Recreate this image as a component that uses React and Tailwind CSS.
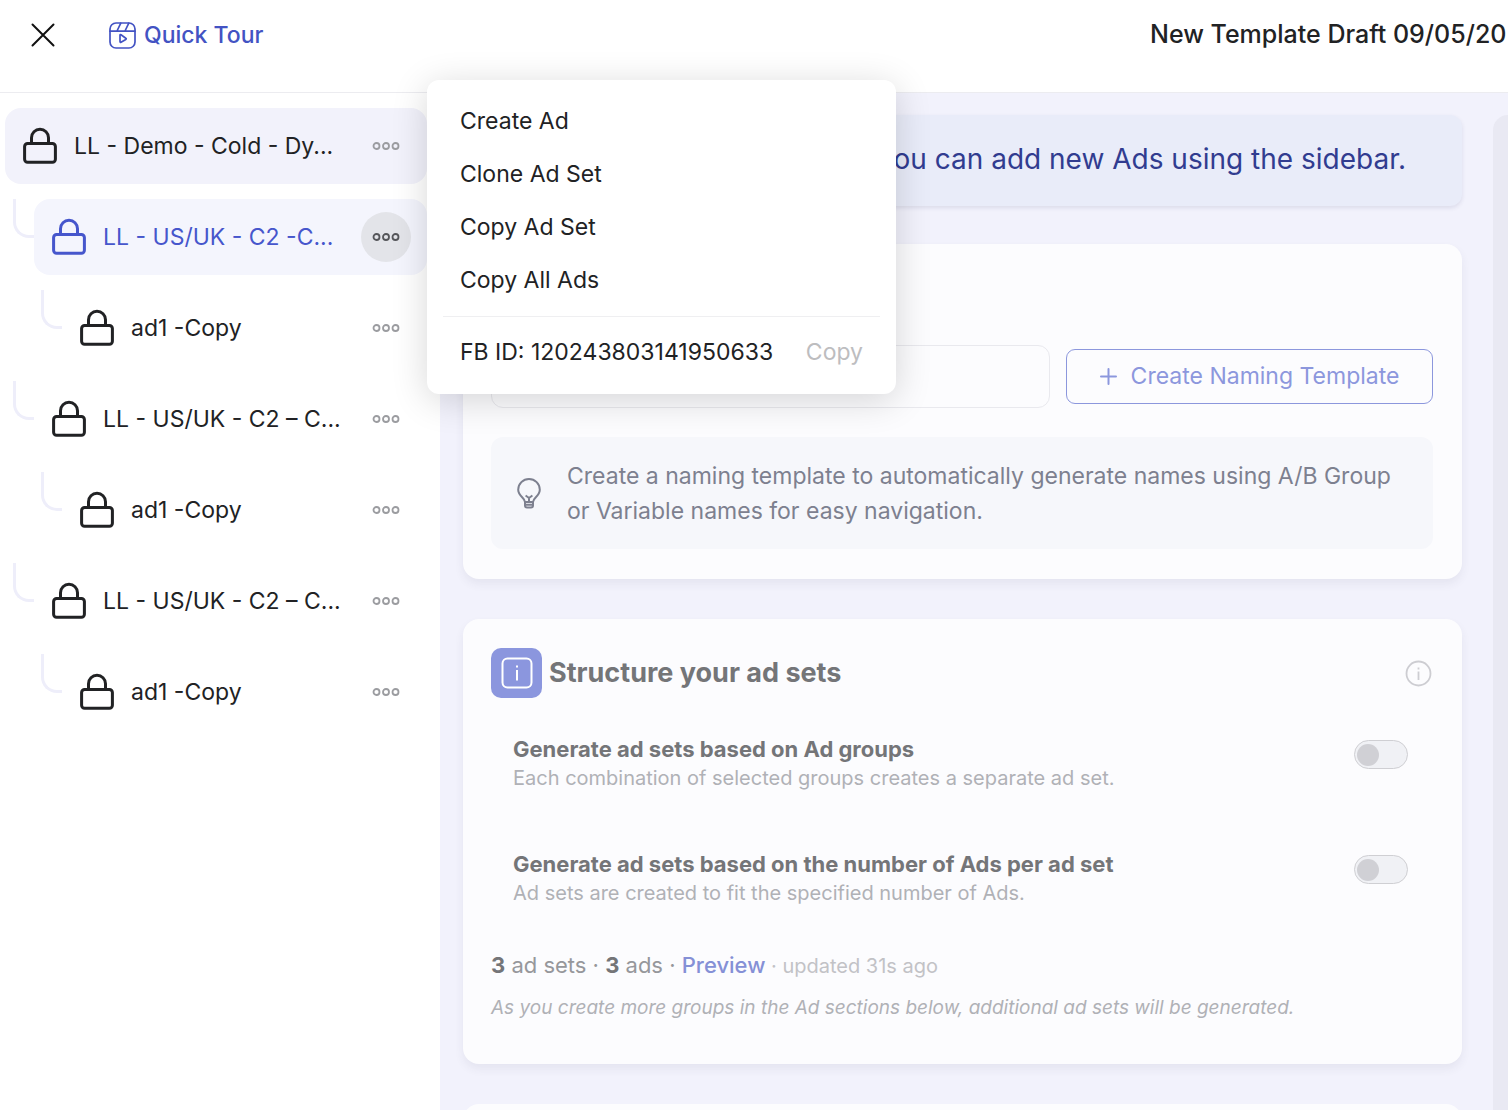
import { useState } from "react";

const treeItems = [
  { id: 1, level: 0, name: "LL - Demo - Cold - Dy...", state: "parent" },
  { id: 2, level: 1, name: "LL - US/UK - C2 -C...", state: "active" },
  { id: 3, level: 2, name: "ad1 -Copy" },
  { id: 4, level: 1, name: "LL - US/UK - C2 – C..." },
  { id: 5, level: 2, name: "ad1 -Copy" },
  { id: 6, level: 1, name: "LL - US/UK - C2 – C..." },
  { id: 7, level: 2, name: "ad1 -Copy" },
];

const menuItems = ["Create Ad", "Clone Ad Set", "Copy Ad Set", "Copy All Ads"];

const LockIcon = () => (
  <svg width="34" height="38" viewBox="0 0 34 38" fill="none" stroke="currentColor" strokeWidth="3" className="shrink-0">
    <rect x="1.6" y="16.500" width="30.8" height="18.8" rx="3" />
    <path d="M8.500 16.500v-5.800a8.500 8.500 0 0 1 17 0v5.800" />
  </svg>
);

const DotsIcon = () => (
  <svg width="28" height="10" viewBox="0 0 28 10" fill="none" stroke="currentColor" strokeWidth="1.8">
    <circle cx="4.500" cy="5" r="3" />
    <circle cx="14" cy="5" r="3" />
    <circle cx="23.500" cy="5" r="3" />
  </svg>
);

const TourIcon = () => (
  <svg width="27" height="27" viewBox="0 0 27 27" fill="none" stroke="currentColor" strokeWidth="1.7" strokeLinejoin="round" strokeLinecap="round">
    <rect x="1" y="1" width="25" height="25" rx="6" />
    <path d="M1 9.200h25M11.800 1.200 8 9M19.800 1.200 16 9M11 13.200v6.400q0 1.100 1 .6l4.800-2.800q.9-.6 0-1.200l-4.800-3.400q-1-.6-1 .4Z" />
  </svg>
);

const BulbIcon = () => (
  <svg width="24" height="31" viewBox="0 0 24 31" fill="none" stroke="currentColor" strokeWidth="2" strokeLinejoin="round" className="shrink-0">
    <path d="M8 24c0-4-6.800-6-6.800-12.200a10.800 10.800 0 0 1 21.600 0C22.800 18 16 20 16 24Z" />
    <path d="M8 24v3.500a2 2 0 0 0 2 2h4a2 2 0 0 0 2-2V24M8 26.800h8M12 24v-4.500M8.600 17.500l3.400 2.500 3.400-2.500" />
  </svg>
);

const TreeRow = ({ item }) => {
  const active = item.state === "active";

  return (
    <li className="flex h-[76px]">
      {item.level > 0 && (
        <span
          className={`h-[39px] w-[21px] shrink-0 rounded-bl-2xl border-b-3 border-l-3 border-[#eeeefa] ${
            item.level === 1 ? "ml-2" : "ml-9"
          }`}
        />
      )}
      <div
        className={`flex min-w-0 flex-1 items-center rounded-2xl pr-4 pl-[18px] ${
          active ? "bg-[#f4f5fd] text-[#4656cc]" : "text-[#212224]"
        } ${item.state === "parent" ? "bg-[#f2f2fb]" : ""}`}
      >
        <LockIcon />
        <span className="ml-[17px] flex-1 text-[23px] whitespace-nowrap">{item.name}</span>
        <button
          type="button"
          aria-label={`Options for ${item.name}`}
          className={`flex size-[50px] shrink-0 items-center justify-center rounded-full ${
            active ? "bg-[#e3e4e9] text-[#55565a]" : "text-[#9b9ca0]"
          }`}
        >
          <DotsIcon />
        </button>
      </div>
    </li>
  );
};

const ContextMenu = () => (
  <div className="absolute top-20 left-[427px] z-20 w-[469px] rounded-xl bg-white py-[15px] text-[23px] text-[#212224] shadow-[0_6px_36px_rgba(0,0,0,0.16)]">
    {menuItems.map((label) => (
      <button key={label} type="button" className="flex h-[53px] w-full items-center px-[33px]">
        {label}
      </button>
    ))}
    <div className="mx-4 my-[9px] border-t border-[#efeff1]" />
    <div className="flex h-[53px] items-center justify-between px-[33px]">
      <span>FB ID: 120243803141950633</span>
      <button type="button" className="text-[#bdbdbf]">Copy</button>
    </div>
  </div>
);

const InfoTile = () => (
  <span className="flex h-[50px] w-[51px] items-center justify-center rounded-[10px] bg-[#8b96de] text-white">
    <svg width="32" height="32" viewBox="0 0 32 32" fill="none" stroke="currentColor" strokeWidth="2">
      <rect x="1.500" y="1.500" width="29" height="29" rx="5" />
      <path d="M16 13v10.500M16 8.500v2" />
    </svg>
  </span>
);

const ToggleRow = ({ id, title, text }) => {
  const [checked, setChecked] = useState(false);

  return (
    <div className="flex justify-between pr-6 pl-[22px]">
      <label htmlFor={id}>
        <span className="block text-[22px] leading-[30px] font-bold text-[#747578]">{title}</span>
        <span className="block text-xl leading-7 text-[#b0b1b6]">{text}</span>
      </label>
      <input
        id={id}
        type="checkbox"
        role="switch"
        checked={checked}
        onChange={(e) => setChecked(e.target.checked)}
        className="mt-[6px] h-[29px] w-[54px] shrink-0 appearance-none rounded-full border border-[#cfcfd3] bg-[#f0f1f5] px-[2px] py-[3px] before:block before:size-[22px] before:rounded-full before:bg-[#d0d0d5] checked:before:ml-6"
      />
    </div>
  );
};

const App = () => {
  const [name, setName] = useState("");

  return (
    <div className="relative flex h-screen flex-col overflow-hidden bg-white font-['Inter',sans-serif]">
      {/* Top bar */}
      <header className="flex h-[93px] shrink-0 border-b border-[#ececf0] pt-[15px] pl-[31px]">
        <button type="button" aria-label="Close" className="flex h-10 items-center text-[#111]">
          <svg width="24" height="24" viewBox="0 0 24 24" fill="none" stroke="currentColor" strokeWidth="2" strokeLinecap="round">
            <path d="M1.500 1.500l21 21M22.500 1.500l-21 21" />
          </svg>
        </button>
        <button type="button" className="ml-[54px] flex h-10 items-center gap-2 text-[23px] font-medium text-[#4353c3]">
          <TourIcon />
          Quick Tour
        </button>
        <h1 className="ml-auto w-[358px] text-[25px] leading-[38px] font-medium whitespace-nowrap text-[#212224]">
          New Template Draft 09/05/20
        </h1>
      </header>

      <div className="flex min-h-0 flex-1">
        {/* Sidebar tree */}
        <nav className="w-[440px] shrink-0 pt-[15px] pr-[13px] pl-[5px]">
          <ul className="flex flex-col gap-[15px]">
            {treeItems.map((item) => (
              <TreeRow key={item.id} item={item} />
            ))}
          </ul>
        </nav>

        {/* Content */}
        <main className="flex min-w-0 flex-1 gap-[31px] overflow-hidden bg-[#f2f2fc] pt-[22px] pl-[23px]">
          <div className="min-w-0 flex-1">
            <div className="flex h-[91px] items-center justify-end rounded-xl bg-[#e9ecf9] pr-14 pb-1 text-[28px] whitespace-nowrap text-[#313c90] shadow-[0_2px_4px_rgba(60,60,110,0.12)]">
              Here you can add new Ads using the sidebar.
            </div>

            {/* Name card */}
            <section className="mt-[38px] rounded-2xl bg-[#fcfcfe] pt-[29px] pr-[29px] pb-[30px] pl-7 shadow-[0_5px_10px_rgba(60,60,90,0.07)]">
              <InfoTile />
              <div className="mt-[22px] flex items-center gap-4">
                <input
                  type="text"
                  aria-label="Ad set name"
                  value={name}
                  onChange={(e) => setName(e.target.value)}
                  className="h-[63px] min-w-0 flex-1 rounded-xl border border-[#e9e9ee] bg-transparent px-4 text-[23px] outline-none"
                />
                <button
                  type="button"
                  className="flex h-[55px] w-[367px] shrink-0 items-center justify-center gap-[14px] rounded-[9px] border border-[#8c97dd] text-[23px] whitespace-nowrap text-[#8c97dd]"
                >
                  <svg width="17" height="17" viewBox="0 0 17 17" stroke="currentColor" strokeWidth="2" strokeLinecap="round">
                    <path d="M8.500 1v15M1 8.500h15" />
                  </svg>
                  Create Naming Template
                </button>
              </div>
              <div className="mt-[29px] flex h-28 items-center gap-[26px] rounded-xl bg-[#f6f7fb] pr-6 pl-[26px] text-[#7d808f]">
                <BulbIcon />
                <p className="flex-1 pt-[2px] text-[23px] leading-[35px]">
                  Create a naming template to automatically generate names using A/B Group or Variable names for easy navigation.
                </p>
              </div>
            </section>

            {/* Structure card */}
            <section className="mt-10 rounded-2xl bg-[#fcfcfe] pt-[29px] pr-[30px] pb-[41px] pl-7 shadow-[0_5px_10px_rgba(60,60,90,0.07)]">
              <div className="flex items-center">
                <InfoTile />
                <h2 className="ml-[7px] flex-1 text-[27px] leading-9 font-bold text-[#747578]">Structure your ad sets</h2>
                <button type="button" aria-label="More info" className="text-[#cdcdd2]">
                  <svg width="27" height="27" viewBox="0 0 27 27" fill="none" stroke="currentColor" strokeWidth="1.800">
                    <circle cx="13.500" cy="13.500" r="12" />
                    <path d="M13.500 11.500v8.500M13.500 7.500v2" />
                  </svg>
                </button>
              </div>

              <div className="mt-9 flex flex-col gap-[57px]">
                <ToggleRow
                  id="by-groups"
                  title="Generate ad sets based on Ad groups"
                  text="Each combination of selected groups creates a separate ad set."
                />
                <ToggleRow
                  id="by-count"
                  title="Generate ad sets based on the number of Ads per ad set"
                  text="Ad sets are created to fit the specified number of Ads."
                />
              </div>

              <p className="mt-[43px] text-[22px] leading-[30px] text-[#96979b]">
                <b className="font-bold text-[#747578]">3</b> ad sets · <b className="font-bold text-[#747578]">3</b> ads ·{" "}
                <a href="#preview" className="font-medium text-[#8590d6]">Preview</a>
                <span className="text-xl text-[#c2c2c6]"> · updated 31s ago</span>
              </p>
              <p className="mt-[13px] text-[19px] leading-[30px] text-[#b0b1b6] italic">
                As you create more groups in the Ad sections below, additional ad sets will be generated.
              </p>
            </section>

            <section className="mt-10 h-40 rounded-2xl bg-[#fcfcfe]" />
          </div>

          <aside className="w-[15px] shrink-0 rounded-tl-2xl bg-[#e9e9f3]" />
        </main>
      </div>

      <ContextMenu />
    </div>
  );
};

export default App;
